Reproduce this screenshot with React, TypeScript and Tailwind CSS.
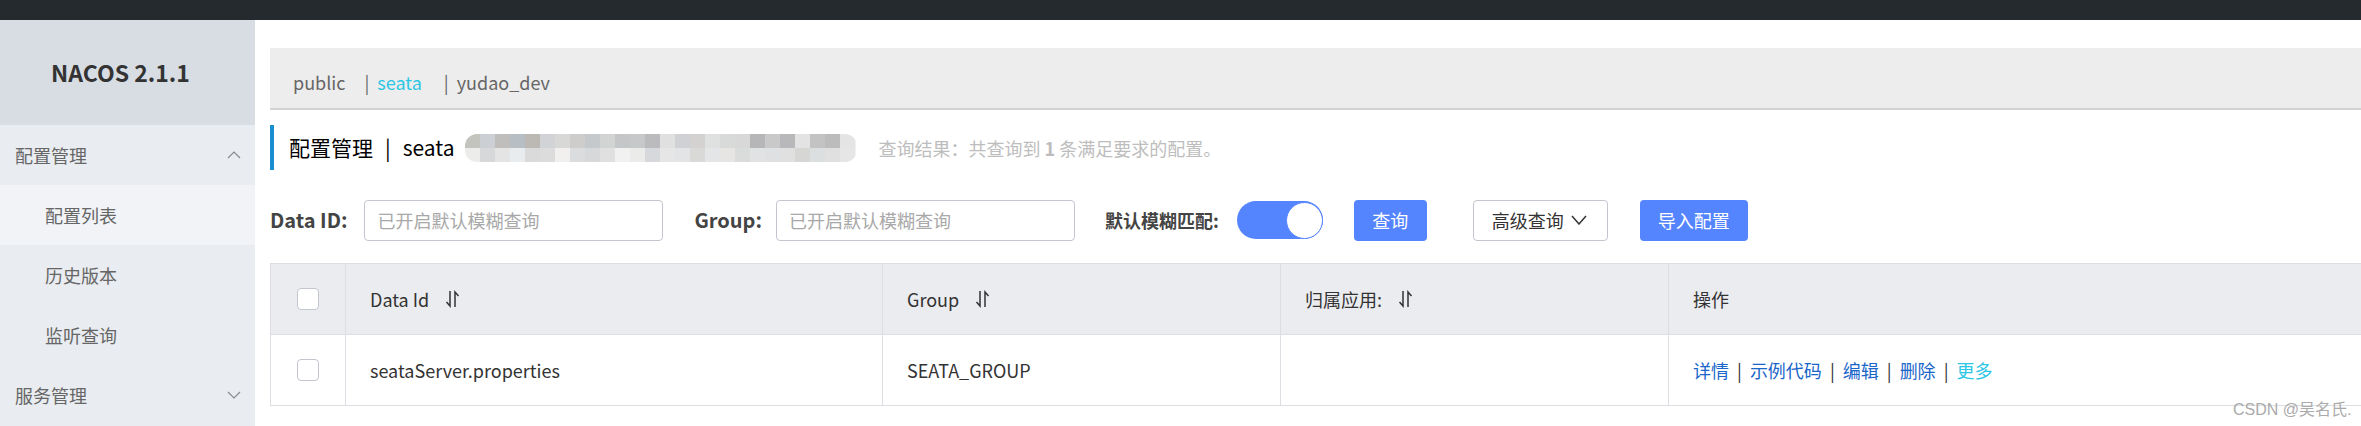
import React from 'react';

const topRow = ['#c4c4bf', '#ccd0d4', '#bfbebd', '#b8bfc4', '#bcb9b5', '#d1d3d6', '#d8d8d6', '#cfcdcb', '#c6c9cc', '#d2d3d3', '#c4c6c7', '#c6c8c9', '#bbbabd', '#e0e0e0', '#cfd1d4', '#d3d2d1', '#dfe0e0', '#d8d9d9', '#d8d8d8', '#b6b5b7', '#c9c9ca', '#b8b8ba', '#e3e3e3', '#c3c3c3', '#bcbcbc', '#e4e4e4'];
const bottomRow = ['#ecedeb', '#d7d8da', '#e4e4e5', '#e8ecee', '#dadada', '#dcdcdc', '#f1f0ef', '#dbdcde', '#d7d8da', '#e0e0e0', '#f1f1f1', '#ebebea', '#d7d8dc', '#e6e6e6', '#e3e4e6', '#d9d9d8', '#e4e5e7', '#e6e5e3', '#dadcdb', '#e1e2e3', '#dfe0e1', '#e0e0e0', '#d6d6d5', '#dcdfdf', '#e0e0e0', '#e6e6e6'];

function Mosaic() {
  return (
    <svg width="392" height="28" viewBox="0 0 392 28">
      <defs>
        <clipPath id="mosaic-clip">
          <rect x="0" y="0" width="392" height="28" rx="12" />
        </clipPath>
      </defs>
      <g clipPath="url(#mosaic-clip)">
        {topRow.map((c, i) => (
          <rect key={'t' + i} x={i * 15} y={0} width={15.5} height={14} fill={c} />
        ))}
        {bottomRow.map((c, i) => (
          <rect key={'b' + i} x={i * 15} y={14} width={15.5} height={14} fill={c} />
        ))}
      </g>
    </svg>
  );
}

function Chevron({ up }: { up?: boolean }) {
  return (
    <svg width="14" height="8" viewBox="0 0 14 8" fill="none" stroke="#8a8a8a" strokeWidth="1.2">
      {up ? <polyline points="1,7 7,1 13,7" /> : <polyline points="1,1 7,7 13,1" />}
    </svg>
  );
}

function SortIcon() {
  return (
    <svg width="15" height="18" viewBox="0 0 15 18" fill="none" stroke="#333" strokeWidth="1.5" className="ml-[16px]">
      <path d="M5 1 L5 16 L1.5 12" />
      <path d="M10 17 L10 2 L13.5 6" />
    </svg>
  );
}

function SideItem({ label, sub, active, chevron }: { label: string; sub?: boolean; active?: boolean; chevron?: 'up' | 'down' }) {
  return (
    <div className={`h-[60px] flex items-center justify-between pr-[14px] ${sub ? 'pl-[45px]' : 'pl-[15px]'} ${active ? 'bg-[#f1f3f6]' : ''}`}>
      <span className="text-[18px] leading-none text-[#666]">{label}</span>
      {chevron && <Chevron up={chevron === 'up'} />}
    </div>
  );
}

export default function App() {
  const actions = ['详情', '示例代码', '编辑', '删除'];

  return (
    <div className="relative w-[2361px] h-[426px] overflow-hidden bg-white flex flex-col font-['Noto_Sans_CJK_SC',sans-serif]">
      <div className="h-5 shrink-0 bg-[#252a2f]" />

      <div className="flex flex-1 min-h-0">
        <aside className="w-[255px] shrink-0 bg-[#e9ecf0] flex flex-col">
          <div className="h-[105px] bg-[#d8dde3] flex items-center justify-center pr-[14px]">
            <span className="text-[23px] font-bold leading-none text-[#333]">NACOS 2.1.1</span>
          </div>
          <SideItem label="配置管理" chevron="up" />
          <SideItem label="配置列表" sub active />
          <SideItem label="历史版本" sub />
          <SideItem label="监听查询" sub />
          <SideItem label="服务管理" chevron="down" />
        </aside>

        <main className="flex-1 min-w-0 pl-[15px] pt-7">
          {/* namespaces */}
          <div className="h-[62px] bg-[#ededed] border-b-2 border-[#d2d2d2] flex items-center pl-[23px] pt-2 text-[18px] leading-none">
            <span className="text-[#666]">public</span>
            <span className="ml-[19px] text-[#666]">|</span>
            <span className="ml-[8px] text-[#2ec6e5]">seata</span>
            <span className="ml-[22px] text-[#666]">|</span>
            <span className="ml-[8px] text-[#666]">yudao_dev</span>
          </div>

          {/* title */}
          <div className="mt-[15px] h-[45px] border-l-4 border-[#1a8fd0] flex items-center pl-[15px]">
            <span className="text-[21px] leading-none text-black">配置管理</span>
            <span className="mx-[12px] text-[21px] leading-none text-black">|</span>
            <span className="text-[21px] leading-none text-black">seata</span>
            <div className="ml-[10px] flex items-center">
              <Mosaic />
            </div>
            <span className="ml-[22px] text-[18px] leading-none text-[#bdbdbd]">
              查询结果：共查询到 <b className="font-bold">1</b> 条满足要求的配置。
            </span>
          </div>

          {/* filters */}
          <div className="mt-[29px] h-[42px] flex items-center">
            <span className="text-[20px] font-bold leading-none text-[#444]">Data ID:</span>
            <div className="ml-[17px] w-[299px] h-[41px] border border-[#c4c6cf] rounded-[4px] flex items-center pl-[12px]">
              <span className="text-[18px] leading-none text-[#a8a8a8]">已开启默认模糊查询</span>
            </div>
            <span className="ml-[31px] text-[20px] font-bold leading-none text-[#444]">Group:</span>
            <div className="ml-[14px] w-[299px] h-[41px] border border-[#c4c6cf] rounded-[4px] flex items-center pl-[12px]">
              <span className="text-[18px] leading-none text-[#a8a8a8]">已开启默认模糊查询</span>
            </div>
            <span className="ml-[30px] text-[18px] font-bold leading-none text-[#444]">默认模糊匹配:</span>
            <div className="ml-[18px] w-[86px] h-[38px] rounded-full bg-[#5584ff] flex items-center justify-end">
              <div className="w-[37px] h-[37px] rounded-full bg-white border border-[#5584ff]" />
            </div>
            <button className="ml-[31px] w-[73px] h-[41px] rounded-[4px] bg-[#5584ff] text-white text-[18px] leading-none">查询</button>
            <button className="ml-[46px] w-[135px] h-[41px] rounded-[4px] bg-white border border-[#c4c6cf] flex items-center pl-[18px] gap-[7px] text-[18px] leading-none text-[#333]">
              高级查询
              <svg width="16" height="10" viewBox="0 0 16 10" fill="none" stroke="#333" strokeWidth="1.5">
                <polyline points="1,1 8,9 15,1" />
              </svg>
            </button>
            <button className="ml-[32px] w-[108px] h-[41px] rounded-[4px] bg-[#5584ff] text-white text-[18px] leading-none">导入配置</button>
          </div>

          {/* table */}
          <div className="mt-[22px] w-[2200px] border border-[#dcdee3] text-[18px] leading-none text-[#333]">
            <div className="h-[71px] grid grid-cols-[75px_537px_398px_388px_1fr] bg-[#ebecf0] border-b border-[#dcdee3]">
              <div className="flex items-center justify-center border-r border-[#dcdee3]">
                <div className="w-[22px] h-[22px] rounded-[4px] border border-[#c4c6cf] bg-white" />
              </div>
              <div className="flex items-center pl-[24px] border-r border-[#dcdee3]">
                Data Id <SortIcon />
              </div>
              <div className="flex items-center pl-[24px] border-r border-[#dcdee3]">
                Group <SortIcon />
              </div>
              <div className="flex items-center pl-[24px] border-r border-[#dcdee3]">
                归属应用: <SortIcon />
              </div>
              <div className="flex items-center pl-[24px]">操作</div>
            </div>
            <div className="h-[70px] grid grid-cols-[75px_537px_398px_388px_1fr] bg-white">
              <div className="flex items-center justify-center border-r border-[#dcdee3]">
                <div className="w-[22px] h-[22px] rounded-[4px] border border-[#c4c6cf] bg-white" />
              </div>
              <div className="flex items-center pl-[24px] border-r border-[#dcdee3]">seataServer.properties</div>
              <div className="flex items-center pl-[24px] border-r border-[#dcdee3]">SEATA_GROUP</div>
              <div className="border-r border-[#dcdee3]" />
              <div className="flex items-center pl-[24px]">
                {actions.map((a) => (
                  <React.Fragment key={a}>
                    <span className="text-[#1a66c9]">{a}</span>
                    <span className="mx-[8px] text-[#333]">|</span>
                  </React.Fragment>
                ))}
                <span className="text-[#2ec6e5]">更多</span>
              </div>
            </div>
          </div>
        </main>
      </div>

      <span className="absolute left-[2233px] top-[402px] text-[16px] leading-none text-[#aaaaaa] font-['Liberation_Sans','Noto_Sans_CJK_SC',sans-serif]">
        CSDN @吴名氏.
      </span>
    </div>
  );
}
